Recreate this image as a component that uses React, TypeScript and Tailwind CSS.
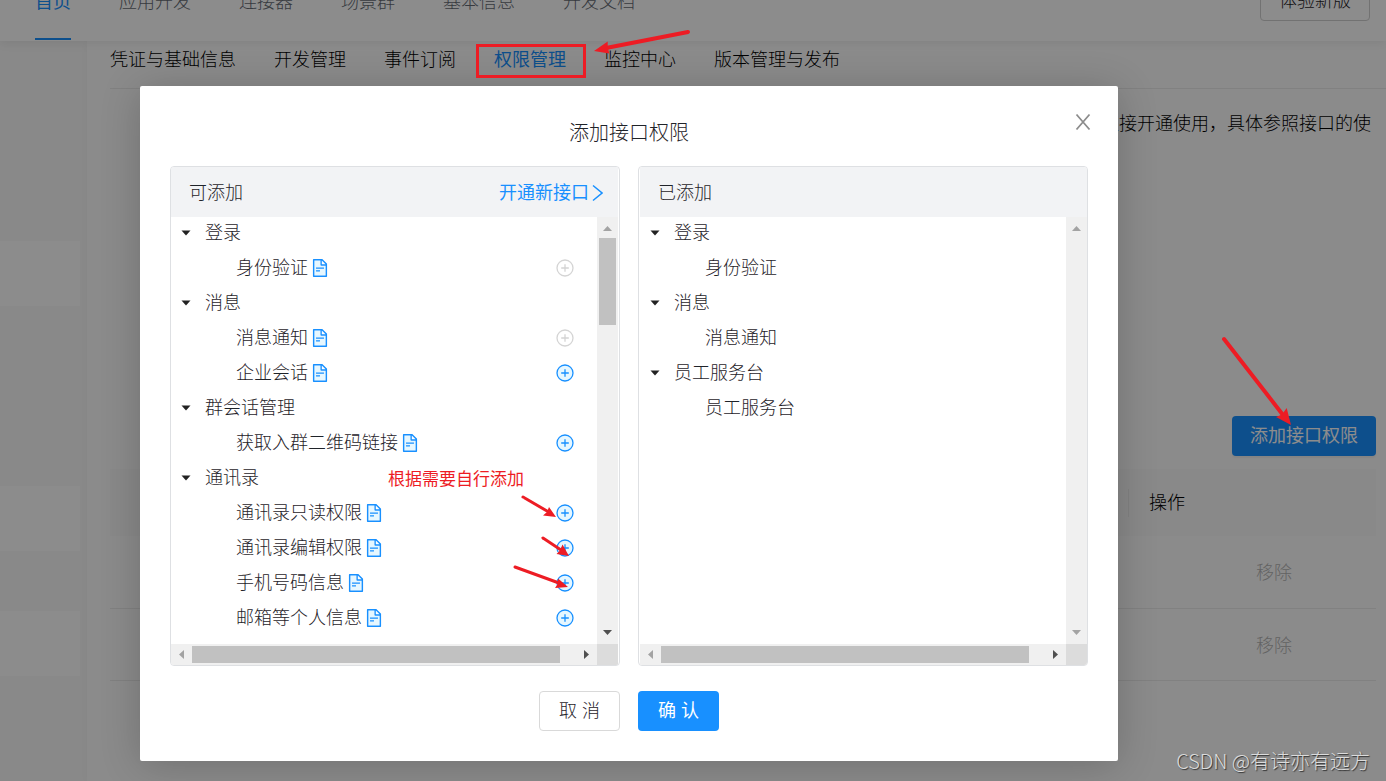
import { Fragment } from 'react';

interface Permission {
  name: string;
  added?: boolean;
}

interface PermissionGroup {
  name: string;
  items: Permission[];
}

const topNav = ['首页', '应用开发', '连接器', '场景群', '基本信息', '开发文档'];

const subTabs = ['凭证与基础信息', '开发管理', '事件订阅', '权限管理', '监控中心', '版本管理与发布'];

const available: PermissionGroup[] = [
  { name: '登录', items: [{ name: '身份验证', added: true }] },
  { name: '消息', items: [{ name: '消息通知', added: true }, { name: '企业会话' }] },
  { name: '群会话管理', items: [{ name: '获取入群二维码链接' }] },
  {
    name: '通讯录',
    items: [
      { name: '通讯录只读权限' },
      { name: '通讯录编辑权限' },
      { name: '手机号码信息' },
      { name: '邮箱等个人信息' }
    ]
  }
];

const selected: PermissionGroup[] = [
  { name: '登录', items: [{ name: '身份验证' }] },
  { name: '消息', items: [{ name: '消息通知' }] },
  { name: '员工服务台', items: [{ name: '员工服务台' }] }
];

function DocIcon() {
  return (
    <svg viewBox="64 64 896 896" className="h-[18px] w-[18px]" aria-hidden="true">
      <path fill="#e6f7ff" d="M534 352V136H232v752h560V394H576a42 42 0 0 1-42-42z" />
      <path
        fill="#1890ff"
        d="M854.6 288.6L639.4 73.4c-6-6-14.1-9.4-22.6-9.4H192c-17.7 0-32 14.3-32 32v832c0 17.7 14.3 32 32 32h640c17.7 0 32-14.3 32-32V311.3c0-8.5-3.4-16.7-9.4-22.7zM602 137.8L790.2 326H602V137.8zM792 888H232V136h302v216a42 42 0 0 0 42 42h216v494z"
      />
      <path
        fill="#1890ff"
        d="M312 490v48c0 4.400 3.600 8 8 8h384c4.400 0 8-3.600 8-8v-48c0-4.400-3.600-8-8-8H320c-4.400 0-8 3.600-8 8zM504 618H320c-4.400 0-8 3.600-8 8v48c0 4.400 3.600 8 8 8h184c4.400 0 8-3.600 8-8v-48c0-4.400-3.600-8-8-8z"
      />
    </svg>
  );
}

function PlusCircle({ disabled }: { disabled?: boolean }) {
  const stroke = disabled ? '#d4d4d4' : '#1890ff';
  return (
    <svg viewBox="0 0 18 18" className="h-[18px] w-[18px]" aria-hidden="true">
      <circle cx="9" cy="9" r="8" fill={disabled ? '#ffffff' : '#e6f7ff'} stroke={stroke} strokeWidth="1.3" />
      <path d="M9 5.200v7.600M5.200 9h7.600" stroke={stroke} strokeWidth="1.3" />
    </svg>
  );
}

function Caret() {
  return (
    <svg viewBox="0 0 10 6" className="h-[6px] w-[10px]" aria-hidden="true">
      <path d="M.5 .5h9L5 5.500z" fill="#222" />
    </svg>
  );
}

// Little triangle at either end of a scrollbar
function Arrow({ dir, dark }: { dir: 'up' | 'down' | 'left' | 'right'; dark?: boolean }) {
  const paths = {
    up: 'M6 14h9l-4.500-5z',
    down: 'M6 7h9l-4.500 5z',
    left: 'M13 6v9l-5-4.500z',
    right: 'M8 6v9l5-4.500z'
  };
  return (
    <svg viewBox="0 0 21 21" className="h-[21px] w-[21px] shrink-0" aria-hidden="true">
      <path d={paths[dir]} fill={dark ? '#505050' : '#a3a3a3'} />
    </svg>
  );
}

function Tree({ groups, editable }: { groups: PermissionGroup[]; editable?: boolean }) {
  return (
    <ul className="flex flex-1 flex-col gap-[5px] pt-px pb-[11px] text-[18px] text-[#1f2329]">
      {groups.map((group) => (
        <Fragment key={group.name}>
          <li className="flex h-[30px] items-center gap-[14px] pl-[10px]">
            <Caret />
            <span>{group.name}</span>
          </li>
          {group.items.map((item) => (
            <li key={item.name} className="flex h-[30px] items-center gap-[3px] pr-[23px] pl-[65px]">
              <span>{item.name}</span>
              {editable && (
                <>
                  <a href="#doc" aria-label={`${item.name}文档`}>
                    <DocIcon />
                  </a>
                  <button type="button" disabled={item.added} aria-label={`添加${item.name}`} className="ml-auto">
                    <PlusCircle disabled={item.added} />
                  </button>
                </>
              )}
            </li>
          ))}
        </Fragment>
      ))}
    </ul>
  );
}

interface PanelProps {
  title: string;
  groups: PermissionGroup[];
  editable?: boolean;
}

function Panel({ title, groups, editable }: PanelProps) {
  return (
    <section
      className={`flex min-w-0 flex-1 flex-col overflow-hidden rounded-[4px] border border-[#dee0e3] ${
        editable ? 'pr-px' : 'pl-px'
      }`}
    >
      <div className="flex h-[50px] items-center justify-between bg-[#f2f3f5] pt-[2px] pr-[15px] pl-[18px] text-[18px]">
        <h3 className="text-[#1f2329]">{title}</h3>
        {editable && (
          <a href="#apply" className="flex items-center gap-[3px] font-normal text-[#1890ff]">
            开通新接口
            <svg viewBox="0 0 11 18" className="h-[18px] w-[11px]" fill="none" aria-hidden="true">
              <path d="M1 1.500L10 9l-9 7.500" stroke="#1890ff" strokeWidth="1.500" />
            </svg>
          </a>
        )}
      </div>
      <div className="flex flex-1">
        <Tree groups={groups} editable={editable} />
        <div className="flex w-[21px] flex-col bg-[#f0f0f0]">
          <Arrow dir="up" />
          <div className="flex-1">{editable && <div className="mx-[2px] h-[87px] bg-[#c1c1c1]" />}</div>
          <Arrow dir="down" dark={editable} />
        </div>
      </div>
      <div className="flex h-[21px] bg-[#f0f0f0]">
        <Arrow dir="left" />
        <div className="my-[2px] flex-1 bg-[#c1c1c1]" />
        <div className="w-[16px]" />
        <Arrow dir="right" dark />
        <div className="w-[21px] bg-[#dcdcdc]" />
      </div>
    </section>
  );
}

function Annotations() {
  return (
    <div className="pointer-events-none absolute inset-0 z-20 overflow-hidden">
      <svg width="1386" height="781" viewBox="0 0 1386 781" className="max-w-none" aria-hidden="true">
        <rect x="477.5" y="45.5" width="107" height="31" fill="none" stroke="#ed1c24" strokeWidth="3" />
        <g stroke="#ed1c24" strokeLinecap="round">
          <path d="M688 32L606 48" strokeWidth="4" />
          <path d="M1224 339L1283 415" strokeWidth="4" />
          <path d="M523 497L547 511" strokeWidth="3" />
          <path d="M543 538L561 550" strokeWidth="3" />
          <path d="M515 567L559 583" strokeWidth="3" />
        </g>
        <g fill="#ed1c24">
          <path d="M594 51l13.700-9.500 0 5 1.500 7z" />
          <path d="M1291 425l-15-8 6-2.500 4.700-6.500z" />
          <path d="M556 517l-13-1.500 4-3.500 2-5z" />
          <path d="M569 556l-12.500-2 3.500-3.500 2.500-6z" />
          <path d="M568 587l-13 1 3-4.500 0-5z" />
        </g>
      </svg>
      <p className="absolute top-[467px] left-[388px] text-[17px] leading-[26px] font-normal text-[#ed1c24]">
        根据需要自行添加
      </p>
      <p className="absolute right-4 bottom-[6px] font-['Noto_Sans_CJK_SC',sans-serif] text-[20px] leading-[28px] text-[#dcdcdc] [text-shadow:1px_1px_1px_#333]">
        CSDN @有诗亦有远方
      </p>
    </div>
  );
}

export default function App() {
  return (
    <div className="relative flex min-h-screen flex-col overflow-hidden bg-[#f9f9f9] font-['Liberation_Sans','Noto_Sans_CJK_SC',sans-serif] font-light">
      {/* Scrolled page behind the dialog */}
      <header className="z-10 -mt-10 flex h-[81px] items-stretch justify-between bg-white pr-4 pl-[35px] text-[18px] shadow-[0_2px_10px_rgba(0,0,0,0.08)]">
        <nav className="flex gap-12">
          {topNav.map((name, i) => (
            <a
              key={name}
              href="#nav"
              className={`mb-px flex items-center border-b-2 pt-[6px] ${
                i === 0 ? 'border-b-[#1890ff] font-normal text-[#1890ff]' : 'border-b-transparent text-[#646a73]'
              }`}
            >
              {name}
            </a>
          ))}
        </nav>
        <button type="button" className="h-10 self-center rounded-[4px] border border-[#d0d0d0] px-[18px] pt-[2px] text-[#1f2329]">
          体验新版
        </button>
      </header>

      <div className="flex flex-1">
        <aside className="w-20">
          <div className="mt-[200px] h-[65px] bg-white" />
          <div className="mt-[180px] h-[65px] bg-white" />
          <div className="mt-[60px] h-[65px] bg-white" />
        </aside>
        <main className="ml-[7px] min-w-0 flex-1 bg-[#fefefe] pl-[23px] text-[18px] text-black shadow-[0_0_8px_rgba(0,0,0,0.03)]">
          <nav className="flex h-12 items-start gap-[38px] border-b border-[#ececec] pt-[5px]">
            {subTabs.map((name) => (
              <a
                key={name}
                href="#tab"
                className={`leading-[28px] ${name === '权限管理' ? 'font-normal text-[#1890ff]' : ''}`}
              >
                {name}
              </a>
            ))}
          </nav>
          <p className="mt-[21px] pr-[15px] text-right leading-[28px]">直接开通使用，具体参照接口的使</p>
          <div className="mt-[278px] flex justify-end pr-[10px]">
            <button
              type="button"
              className="h-10 rounded-[4px] bg-[#1890ff] px-[18px] font-normal text-white shadow-[0_2px_2px_rgba(0,0,0,0.06)]"
            >
              添加接口权限
            </button>
          </div>
          <div className="mt-[13px] pr-[10px]">
            <table className="w-full border-collapse text-left">
              <thead>
                <tr className="h-[67px] bg-[#f9f9f9]">
                  <th aria-label="接口" />
                  <th className="w-[248px] font-light">
                    <div className="flex h-7 items-center border-l border-[#ececec] pt-[2px] pl-5">操作</div>
                  </th>
                </tr>
              </thead>
              <tbody>
                {selected.slice(0, 2).map((group) => (
                  <tr key={group.name} className="h-[72px] border-b border-[#ececec]">
                    <td />
                    <td className="pt-1 pl-[128px]">
                      <button type="button" disabled className="text-[#b5b5b5]">
                        移除
                      </button>
                    </td>
                  </tr>
                ))}
              </tbody>
            </table>
          </div>
        </main>
      </div>

      {/* Dialog */}
      <div className="absolute inset-0 z-10 flex items-start bg-black/45 pt-[86px] pr-[268px] pl-[140px]">
        <div
          role="dialog"
          aria-labelledby="dialog-title"
          className="relative flex-1 rounded-[2px] bg-white px-[30px] pt-[32px] pb-[30px] shadow-[0_4px_40px_rgba(0,0,0,0.2)]"
        >
          <h2 id="dialog-title" className="text-center text-[20px] leading-[30px] text-[#1f2329]">
            添加接口权限
          </h2>
          <button type="button" aria-label="关闭" className="absolute top-[27px] right-[27px]">
            <svg viewBox="0 0 16 18" className="h-[18px] w-4" fill="none" aria-hidden="true">
              <path d="M1.500 1.500l13 15M14.500 1.500l-13 15" stroke="#8c8c8c" strokeWidth="1.800" />
            </svg>
          </button>
          <div className="mt-[18px] flex gap-[18px]">
            <Panel title="可添加" groups={available} editable />
            <Panel title="已添加" groups={selected} />
          </div>
          <div className="mt-[25px] flex justify-center gap-[18px] text-[18px]">
            <button type="button" className="h-10 w-[81px] rounded-[4px] border border-[#d9d9d9] text-[#1f2329]">
              取 消
            </button>
            <button type="button" className="h-10 w-[81px] rounded-[4px] bg-[#1890ff] font-normal text-white">
              确 认
            </button>
          </div>
        </div>
      </div>

      <Annotations />
    </div>
  );
}
